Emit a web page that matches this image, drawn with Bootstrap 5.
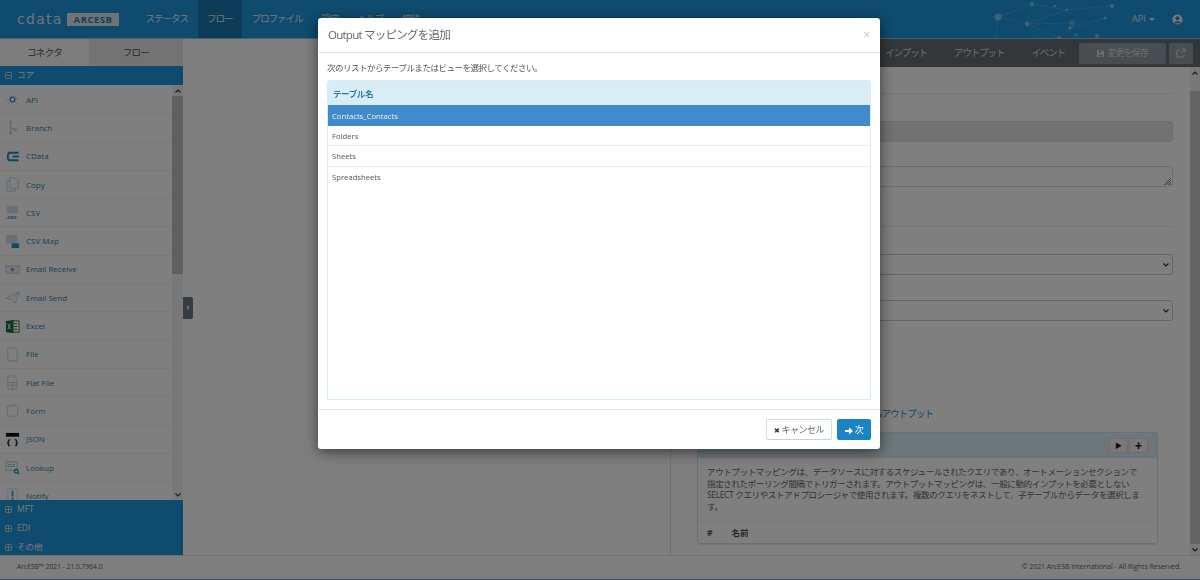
<!DOCTYPE html>
<html lang="ja">
<head>
  <meta charset="UTF-8" />
  <title>ArcESB</title>
  <link href="https://cdn.jsdelivr.net/npm/bootstrap@5.3.0/dist/css/bootstrap.min.css" rel="stylesheet" />
  <style>
    html, body { height: 100%; overflow: hidden; }
    body { font-family: "Open Sans", "Noto Sans CJK JP", sans-serif; font-size: 9px; color: #555; background: #fff; }
    .shell { height: 580px; }
    .top-bar { height: 39px; background: #1e96de; border-bottom: 1px solid #8fc3e0; }
    .brand-word { font-family: "DejaVu Sans", sans-serif; font-size: 14px; font-weight: 400; letter-spacing: 1.3px; color: #e6e6e6; margin-left: 17px; width: 45px; line-height: 1; }
    .brand-tag { background: #e0e6ea; color: #1e7fb8; font-weight: 700; font-size: 9.5px; letter-spacing: .5px; width: 52px; text-align: center; height: 13px; line-height: 13px; margin-left: 5px; margin-right: 17px; border-radius: 1px; }
    .top-link { color: #eee; font-size: 9.5px; letter-spacing: -1px; padding: 0 9.5px; height: 38px; line-height: 38px; }
    .top-link.on { background: #1b78b2; }
    .net-art { margin-right: 10px; }
    .api-menu { color: #e4e4e4; font-size: 9px; width: 23px; margin-right: 17px; white-space: nowrap; }
    .api-caret { display: inline-block; width: 0; height: 0; border: 3px solid transparent; border-top-color: #e4e4e4; border-bottom: 0; vertical-align: middle; margin-left: 1px; }
    .user-icon { margin-right: 17px; }
    .sidebar { width: 183px; }
    .side-tabs { height: 27px; font-size: 9.5px; letter-spacing: -.6px; color: #555; }
    .side-tab { line-height: 27px; text-align: center; background: #fafafa; width: 89px; }
    .side-tab.off { background: #e6e6e6; flex: 1; }
    .group-head { background: #1e96de; color: #eee; height: 19px; padding-left: 5px; font-size: 8.5px; gap: 5px; }
    .group-foot { height: 55px; background: #1e96de; color: #eee; font-size: 8.5px; padding-left: 5px; }
    .group-foot div { height: 19px; gap: 5px; }
    .tree-box { width: 7px; height: 7px; flex: none; }
    .conn-area { height: 415px; overflow: hidden; }
    .conn-list { width: 172px; padding-top: 1px; }
    .conn-row { height: 28.3px; border-bottom: 1px solid #f1f1f1; font-size: 8px; color: #2e7fb0; padding-left: 5px; gap: 6px; }
    .conn-row svg { width: 15px; height: 15px; flex: none; }
    .side-scroll { width: 11px; background: #f1f1f1; }
    .side-thumb { height: 178px; background: #c1c1c1; }
    .scroll-arrow { height: 11px; display: flex; align-items: center; justify-content: center; }
    .scroll-arrow svg { width: 6px; height: 4px; }
    .mid-pane { width: 487px; }
    .pane-toggle { width: 10px; height: 22px; background: #6d7a84; color: #fff; font-size: 9px; font-weight: 700; line-height: 20px; text-align: center; margin-top: 258px; border-radius: 0 2px 2px 0; }
    .right-pane { border-left: 1px solid #e4e4e4; }
    .right-tabs { height: 28px; background: #666e75; color: #ddd; font-size: 9.5px; letter-spacing: -1.1px; padding-right: 7px; }
    .tab-item { margin-right: 27px; }
    .tab-item.last { margin-right: 14px; }
    .save-btn { height: 21px; width: 87px; background: #8f9aa3; color: #ddd; font-size: 9px; letter-spacing: -.9px; gap: 3px; border-radius: 2px; margin-right: 3px; }
    .ext-btn { height: 21px; width: 24px; background: #8f9aa3; border-radius: 2px; }
    .right-body { padding: 0 17px 0 26px; }
    .fake-line { height: 1px; background: #eee; }
    .line-a { margin-top: 26px; }
    .line-b { margin-top: 39px; }
    .fake-input { height: 21px; border: 1px solid #ddd; border-radius: 3px; background: #fff; }
    .fake-input.ro { background: #e4e4e4; margin-top: 27px; }
    .fake-input.ta { margin-top: 24px; position: relative; }
    .ta-grip { position: absolute; right: 0; bottom: 0; width: 9px; height: 9px; }
    .fake-select { height: 21px; border: 1px solid #ccc; border-radius: 3px; padding-right: 3px; display: flex; align-items: center; justify-content: flex-end; }
    .sel-one { margin-top: 27px; }
    .sel-two { margin-top: 25px; }
    .out-link { color: #2e8cc4; font-size: 9.5px; letter-spacing: -.9px; width: 236px; text-align: right; margin-top: 86px; line-height: 14px; }
    .out-panel { border: 1px solid #cfe2ee; border-radius: 3px; width: 461px; margin-top: 11px; box-shadow: 0 1px 1px rgba(0,0,0,.1); }
    .out-head { height: 25px; background: #d9edf7; gap: 1px; padding-right: 9px; }
    .mini-btn { width: 19px; height: 15px; background: #f2f2f2; border: 1px solid #ddd; color: #222; font-size: 7px; line-height: 13px; text-align: center; }
    .out-text { padding: 8px 15px 0 9px; font-size: 8.5px; letter-spacing: -.36px; line-height: 11.6px; color: #666; border-bottom: 1px solid #f0f0f0; height: 64px; }
    .out-cols { height: 21px; line-height: 21px; font-weight: 700; font-size: 8.5px; padding-left: 9px; color: #555; gap: 19px; }
    .page-scroll { width: 10px; background: #f1f1f1; }
    .page-thumb { background: #c8c8c8; margin-top: 13px; }
    .foot-bar { height: 24px; border-top: 1px solid #e2e2e2; background: #fcfcfc; padding: 0 19px 0 17px; color: #666; }
    .foot-left { font-size: 6.7px; }
    .foot-right { font-size: 6.9px; }
    .foot-edge { height: 1px; background: #7c98aa; }

    .dlg-wrap { position: fixed; left: 318px; top: 18px; width: 562px; z-index: 1060; }
    .dlg-wrap .modal-content { height: 431px; background: #fff; border-radius: 3px; border: 0; box-shadow: 0 3px 14px rgba(0,0,0,.55); }
    .dlg-head { height: 35px; padding: 0 10px 0 10px; border-bottom: 1px solid #e5e5e5; }
    .dlg-title { font-size: 11.5px; letter-spacing: -.75px; color: #666; font-weight: 400; margin: 0; }
    .dlg-x { font-size: 12px; color: #bbb; line-height: 1; }
    .dlg-body { padding: 10px 9px 0; height: 357px; border-bottom: 1px solid #e5e5e5; }
    .dlg-hint { font-size: 8.5px; letter-spacing: -.5px; color: #555; height: 17px; line-height: 10px; }
    .tbl-box { height: 320px; border: 1px solid #d4ecf7; border-radius: 3px 3px 0 0; }
    .tbl-head { height: 24px; line-height: 25px; background: #d9edf7; color: #2f7aa3; font-weight: 700; font-size: 8.5px; letter-spacing: -.4px; padding-left: 5px; }
    .tbl-row { height: 20.4px; line-height: 21px; font-size: 7.7px; padding-left: 4px; color: #555; border-bottom: 1px solid #e9e9e9; }
    .tbl-row.sel { background: #428bca; color: #eaf2f9; border-bottom: 0; height: 21px; line-height: 22px; }
    .tbl-row.end { border-bottom: 0; }
    .dlg-foot { height: 39px; padding: 0 9px 0 0; gap: 5px; }
    .dlg-btn { height: 21px; font-size: 9px; letter-spacing: -.5px; line-height: 19px; padding: 0; border-radius: 2px; }
    .dlg-btn.cancel { width: 66px; background: #fff; border: 1px solid #ccdde8; border-bottom-color: #bcd6e6; color: #666; }
    .dlg-btn.cancel .btn-glyph { color: #333; font-size: 7px; }
    .dlg-btn.next { width: 34px; background: #1b84c4; border: 1px solid #1b84c4; color: #fff; }
  </style>
</head>
<body>
  <svg width="0" height="0" class="position-absolute">
    <symbol id="up" viewBox="0 0 6 4"><path d="M.5 3.5 3 1l2.500 2.500" fill="none" stroke="#333" stroke-width="1.200"/></symbol>
    <symbol id="down" viewBox="0 0 6 4"><path d="M.5 .5 3 3 5.500 .5" fill="none" stroke="#333" stroke-width="1.200"/></symbol>
    <symbol id="plus" viewBox="0 0 7 7"><rect x=".5" y=".5" width="6" height="6" rx="1" fill="none" stroke="#ddd" stroke-width=".8"/><path d="M1 3.500h5M3.500 1v5" stroke="#ddd" stroke-width=".8"/></symbol>
    <symbol id="minus" viewBox="0 0 7 7"><rect x=".5" y=".5" width="6" height="6" rx="1" fill="none" stroke="#ddd" stroke-width=".8"/><path d="M1 3.500h5" stroke="#ddd" stroke-width=".8"/></symbol>
  </svg>

  <div class="shell d-flex flex-column">
    <div class="top-bar d-flex align-items-center">
      <span class="brand-word">cdata</span>
      <span class="brand-tag">ARCESB</span>
      <span class="top-link">ステータス</span>
      <span class="top-link on">フロー</span>
      <span class="top-link">プロファイル</span>
      <span class="top-link">設定</span>
      <span class="top-link">ヘルプ</span>
      <span class="top-link">接続</span>
      <svg class="ms-auto net-art" width="132" height="39" viewBox="990 0 132 39">
        <g stroke="#7cc1ea" stroke-width=".6" fill="none" opacity=".6">
          <path d="M998 17 1032 4 1027 24 998 17M1027 24 1059 38M1027 24 1067 10M1032 4 1067 10 1112 6M1027 24 1040 39M998 17 996 39M1070 28 1105 18M1070 28 1059 38M1027 24 1072 23"/>
        </g>
        <g fill="#9fd2ef" opacity=".75">
          <circle cx="998" cy="17" r="3.500"/><circle cx="1032" cy="4" r="2"/><circle cx="1027" cy="24" r="2.300"/><circle cx="1067" cy="10" r="1.200"/><circle cx="1055" cy="6" r="1.200"/><circle cx="1112" cy="6" r="2"/><circle cx="1105" cy="18" r="1.500"/><circle cx="1072" cy="23" r="3" opacity=".5"/><circle cx="1070" cy="28" r="1.800"/><circle cx="1059" cy="38" r="2"/><circle cx="1097" cy="36" r="2"/><circle cx="1076" cy="35" r="2" opacity=".5"/>
        </g>
      </svg>
      <span class="api-menu">API <span class="api-caret"></span></span>
      <svg class="user-icon" width="11" height="11" viewBox="0 0 12 12"><circle cx="6" cy="6" r="5.500" fill="#eee"/><circle cx="6" cy="4.600" r="2.200" fill="#1e96de"/><path d="M2.200 10a4 3.600 0 0 1 7.600 0z" fill="#1e96de"/></svg>
    </div>

    <div class="d-flex flex-grow-1 overflow-hidden">
      <div class="sidebar d-flex flex-column">
        <div class="side-tabs d-flex">
          <div class="side-tab">コネクタ</div>
          <div class="side-tab off">フロー</div>
        </div>
        <div class="group-head d-flex align-items-center"><svg class="tree-box"><use href="#minus"/></svg>コア</div>
        <div class="conn-area d-flex">
          <div class="conn-list" id="connList"></div>
          <div class="side-scroll d-flex flex-column">
            <div class="scroll-arrow"><svg><use href="#up"/></svg></div>
            <div class="side-thumb"></div>
            <div class="flex-grow-1"></div>
            <div class="scroll-arrow"><svg><use href="#down"/></svg></div>
          </div>
        </div>
        <div class="group-foot">
          <div class="d-flex align-items-center"><svg class="tree-box"><use href="#plus"/></svg>MFT</div>
          <div class="d-flex align-items-center"><svg class="tree-box"><use href="#plus"/></svg>EDI</div>
          <div class="d-flex align-items-center"><svg class="tree-box"><use href="#plus"/></svg>その他</div>
        </div>
      </div>
      <div class="mid-pane"><div class="pane-toggle">‹</div></div>
      <div class="right-pane flex-grow-1 d-flex flex-column">
        <div class="right-tabs d-flex align-items-center justify-content-end">
          <span class="tab-item">インプット</span><span class="tab-item">アウトプット</span><span class="tab-item last">イベント</span>
          <span class="save-btn d-flex align-items-center justify-content-center">
            <svg width="7" height="7" viewBox="0 0 7 7"><path d="M0 0h5.500L7 1.500V7H0z" fill="#ddd"/><path d="M1.500 .5h3v2h-3zM1.500 4.500h4v2h-4z" fill="#8f9aa3"/></svg>
            変更を保存
          </span>
          <span class="ext-btn d-flex align-items-center justify-content-center"><svg width="10" height="10" viewBox="0 0 10 10"><path d="M8 6v3H1V2h3M5 5l4-4M6 1h3v3" fill="none" stroke="#ddd"/></svg></span>
        </div>
        <div class="d-flex flex-grow-1 overflow-hidden">
          <div class="flex-grow-1 right-body">
            <div class="fake-line line-a"></div>
            <div class="fake-input ro"></div>
            <div class="fake-input ta">
              <svg class="ta-grip" viewBox="0 0 9 9"><path d="M8 1 1 8M8 3 3 8M8 5 5 8M8 7 7 8" stroke="#555" stroke-width=".7"/></svg>
            </div>
            <div class="fake-line line-b"></div>
            <div class="fake-select sel-one"><svg width="6" height="4"><use href="#down"/></svg></div>
            <div class="fake-select sel-two"><svg width="6" height="4"><use href="#down"/></svg></div>
            <div class="out-link">インプット&amp;アウトプット</div>
            <div class="out-panel">
              <div class="out-head d-flex align-items-center justify-content-end">
                <span class="mini-btn">▶</span><span class="mini-btn">✚</span>
              </div>
              <div class="out-text">アウトプットマッピングは、データソースに対するスケジュールされたクエリであり、オートメーションセクションで指定されたポーリング間隔でトリガーされます。アウトプットマッピングは、一般に動的インプットを必要としない SELECT クエリやストアドプロシージャで使用されます。複数のクエリをネストして、子テーブルからデータを選択します。</div>
              <div class="out-cols d-flex"><span>#</span><span>名前</span></div>
            </div>
          </div>
          <div class="page-scroll d-flex flex-column">
            <div class="scroll-arrow"><svg><use href="#up"/></svg></div>
            <div class="flex-grow-1 page-thumb"></div>
            <div class="scroll-arrow"><svg><use href="#down"/></svg></div>
          </div>
        </div>
      </div>
    </div>

    <div class="foot-bar d-flex align-items-center justify-content-between">
      <span class="foot-left">ArcESB™ 2021 - 21.0.7964.0</span>
      <span class="foot-right">© 2021 ArcESB International - All Rights Reserved.</span>
    </div>
    <div class="foot-edge"></div>
  </div>

  <div class="modal-backdrop show"></div>

  <div class="dlg-wrap">
    <div class="modal-content">
      <div class="dlg-head d-flex align-items-center justify-content-between">
        <h5 class="dlg-title">Output マッピングを追加</h5>
        <span class="dlg-x">×</span>
      </div>
      <div class="dlg-body">
        <div class="dlg-hint">次のリストからテーブルまたはビューを選択してください。</div>
        <div class="tbl-box">
          <div class="tbl-head">テーブル名</div>
          <div class="tbl-row sel">Contacts_Contacts</div>
          <div class="tbl-row">Folders</div>
          <div class="tbl-row">Sheets</div>
          <div class="tbl-row end">Spreadsheets</div>
        </div>
      </div>
      <div class="dlg-foot d-flex align-items-center justify-content-end">
        <button class="btn dlg-btn cancel"><span class="btn-glyph">✖</span> キャンセル</button>
        <button class="btn dlg-btn next"><svg width="8" height="8" viewBox="0 0 8 8"><path d="M0 3h4V.5L8 4 4 7.500V5H0z" fill="#fff"/></svg> 次</button>
      </div>
    </div>
  </div>

  <script>
    const names = ["API","Branch","CData","Copy","CSV","CSV Map","Email Receive","Email Send","Excel","File","Flat File","Form","JSON","Lookup","Notify"];
    const icons = {
      "API": '<circle cx="8" cy="8" r="2.5" fill="none" stroke="#2a8fca" stroke-width="1.5"/><path d="M1 8h3M12 8h3M3 3l2.500 2.500M13 3l-2.500 2.500M3 13l2.500-2.500M13 13l-2.500-2.500" stroke="#cfdfe8"/>',
      "Branch": '<path d="M6 2v12M6 7q0 3 4 3" stroke="#a9c8da" fill="none"/><circle cx="6" cy="2" r="1.200" fill="#fff" stroke="#a9c8da"/><circle cx="6" cy="14" r="1.200" fill="#fff" stroke="#a9c8da"/><circle cx="11" cy="10" r="1.200" fill="#fff" stroke="#a9c8da"/>',
      "CData": '<path d="M15 3H5Q2 3 2 8t3 5h10l-1-2H6Q4 11 4 8t2-3h8z" fill="#1e88c7"/><rect x="8" y="7" width="7" height="2" fill="#1e88c7"/>',
      "Copy": '<path d="M5 4H2v11h9v-3M5 1h6l3 3v8H5z" fill="#fff" stroke="#b8d4e4"/>',
      "CSV": '<rect x="2" y="1" width="12" height="8" fill="#ddd"/><text x="1" y="15" font-size="6" font-weight="700" fill="#2a8fca">.csv</text>',
      "CSV Map": '<rect x="1" y="1" width="12" height="9" fill="#cfdfe8"/><rect x="7" y="10" width="8" height="5" fill="#2a8fca"/>',
      "Email Receive": '<rect x="1" y="4" width="14" height="8" fill="#eee" stroke="#ccd"/><circle cx="8" cy="8" r="2" fill="#6fb0d8"/>',
      "Email Send": '<path d="M1 9 15 2 11 14 7 10zM7 10l8-8" fill="#fff" stroke="#bcd3e2"/>',
      "Excel": '<rect x="7" y="2" width="8" height="12" fill="#fff" stroke="#2e7d4f"/><path d="M9 5h4M9 8h4M9 11h4" stroke="#2e7d4f"/><path d="M1 2l8-1v14l-8-1z" fill="#14713f"/><path d="M3 5l3 6M6 5l-3 6" stroke="#fff"/>',
      "File": '<path d="M3 1h7l3 3v11H3z" fill="#fff" stroke="#bcd6e6"/>',
      "Flat File": '<path d="M3 1h7l3 3v11H3z" fill="#fff" stroke="#bcd6e6"/><path d="M3 8h10M3 11h10M8 8v7" stroke="#bcd6e6"/>',
      "Form": '<path d="M2 4l9-2 3 3-1 9H3z" fill="#fff" stroke="#c5d6df"/><path d="M5 2l7 1" stroke="#c5d6df"/>',
      "JSON": '<rect x="1" y="1" width="14" height="4" fill="#111"/><text x="8" y="14" font-size="8" font-weight="700" fill="#111" text-anchor="middle" font-family="DejaVu Sans">{ }</text>',
      "Lookup": '<rect x="1" y="2" width="12" height="9" fill="#fff" stroke="#a9c8da"/><path d="M3 5h8M3 7h8" stroke="#a9c8da"/><circle cx="12" cy="12" r="2" fill="none" stroke="#1e88c7" stroke-width="1.3"/><path d="M13.500 13.500 15 15" stroke="#1e88c7" stroke-width="1.3"/>',
      "Notify": '<rect x="3" y="1" width="10" height="13" rx="1" fill="#fff" stroke="#cfdfe8"/><path d="M8 3v6M8 10.500v2" stroke="#2a8fca" stroke-width="1.8"/>'
    };
    document.getElementById("connList").innerHTML = names.map(n =>
      `<div class="conn-row d-flex align-items-center"><svg viewBox="0 0 16 16">${icons[n]}</svg><span>${n}</span></div>`
    ).join("");
  </script>
  <script src="https://cdn.jsdelivr.net/npm/bootstrap@5.3.0/dist/js/bootstrap.bundle.min.js"></script>
</body>
</html>
